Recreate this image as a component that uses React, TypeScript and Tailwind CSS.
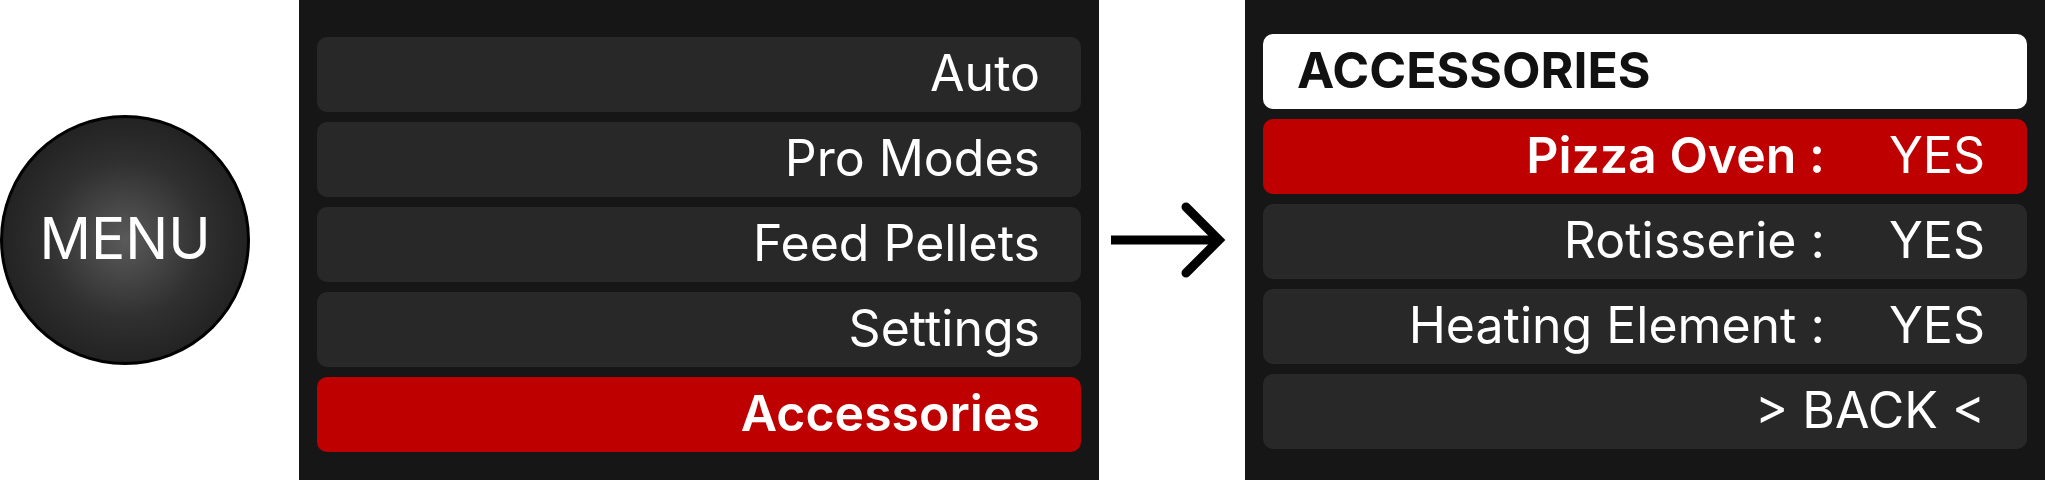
const menuItems = [
  { label: "Auto" },
  { label: "Pro Modes" },
  { label: "Feed Pellets" },
  { label: "Settings" },
  { label: "Accessories", active: true },
];

const accessories = [
  { label: "Pizza Oven :", value: "YES", active: true },
  { label: "Rotisserie :", value: "YES" },
  { label: "Heating Element :", value: "YES" },
];

function MenuButton() {
  return (
    <div className="flex h-[250px] w-[250px] shrink-0 items-center justify-center rounded-full border-[3px] border-black bg-[radial-gradient(circle_at_center,#5a5a5a_0%,#303030_45%,#141414_100%)]">
      <span className="pb-1 text-[57px] leading-none text-white">MENU</span>
    </div>
  );
}

function Arrow() {
  return (
    <svg width="146" height="100" viewBox="0 0 146 100" className="shrink-0">
      <line x1="12" y1="50" x2="118" y2="50" stroke="black" strokeWidth="9" />
      <polyline
        points="87,17 120,50 87,83"
        fill="none"
        stroke="black"
        strokeWidth="9"
        strokeLinecap="round"
        strokeLinejoin="miter"
      />
    </svg>
  );
}

export default function App() {
  return (
    <div className="flex h-[480px] w-[2045px] items-center bg-white font-['Inter',sans-serif]">
      <MenuButton />

      {/* main menu */}
      <div className="ml-[49px] flex h-full w-[800px] shrink-0 flex-col gap-[10px] bg-[#161616] px-[18px] pt-[37px]">
        {menuItems.map((item) => (
          <div
            key={item.label}
            className={`flex h-[75px] items-center justify-end rounded-[10px] pr-[41px] text-[50px] leading-none text-white ${
              item.active ? "bg-[#bf0000] font-semibold" : "bg-[#282828]"
            }`}
          >
            <span className="pb-1">{item.label}</span>
          </div>
        ))}
      </div>

      <Arrow />

      {/* accessories submenu */}
      <div className="flex h-full w-[800px] shrink-0 flex-col gap-[10px] bg-[#161616] px-[18px] pt-[34px]">
        <div className="flex h-[75px] items-center rounded-[10px] bg-white pl-[34px] text-[50px] font-bold leading-none text-[#111]">
          <span className="pb-1">ACCESSORIES</span>
        </div>
        {accessories.map((row) => (
          <div
            key={row.label}
            className={`flex h-[75px] items-center justify-end gap-[64px] rounded-[10px] pr-[42px] text-[50px] leading-none text-white ${
              row.active ? "bg-[#bf0000]" : "bg-[#282828]"
            }`}
          >
            <span className={`pb-1 ${row.active ? "font-semibold" : ""}`}>{row.label}</span>
            <span className="pb-1">{row.value}</span>
          </div>
        ))}
        <div className="flex h-[75px] items-center justify-end rounded-[10px] bg-[#282828] pr-[42px] text-[50px] leading-none text-white">
          <span className="pb-1">&gt; BACK &lt;</span>
        </div>
      </div>
    </div>
  );
}
